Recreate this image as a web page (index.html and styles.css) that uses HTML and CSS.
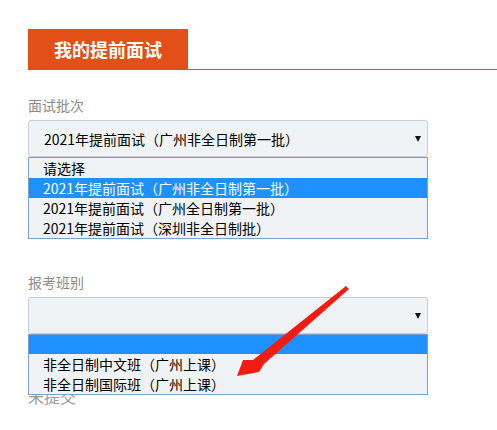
FILE: index.html
```html
<!DOCTYPE html>
<html lang="zh-CN">
<head>
    <meta charset="UTF-8">
    <meta name="viewport" content="width=device-width, initial-scale=1.0">
    <title>我的提前面试</title>
    <link rel="stylesheet" href="styles.css">
</head>
<body>

    <div class="page">
        <div class="tab-head">
            <div class="tab-title">我的提前面试</div>
        </div>

        <div class="field field-batch">
            <div class="field-label">面试批次</div>
            <div class="select-wrap">
                <div class="select-box">
                    <span>2021年提前面试（广州非全日制第一批）</span>
                    <i class="caret"></i>
                </div>
                <ul class="options">
                    <li>请选择</li>
                    <li class="active">2021年提前面试（广州非全日制第一批）</li>
                    <li>2021年提前面试（广州全日制第一批）</li>
                    <li>2021年提前面试（深圳非全日制批）</li>
                </ul>
            </div>
        </div>

        <div class="field field-class">
            <div class="field-label">报考班别</div>
            <div class="select-wrap">
                <div class="select-box">
                    <span></span>
                    <i class="caret"></i>
                </div>
                <ul class="options">
                    <li class="active empty"></li>
                    <li>非全日制中文班（广州上课）</li>
                    <li>非全日制国际班（广州上课）</li>
                </ul>
            </div>
        </div>

        <div class="status">未提交</div>
    </div>

    <!-- red pointer drawn over the open dropdown -->
    <svg class="pointer" width="497" height="430" viewBox="0 0 497 430">
        <path d="M346 286 L349 289 L264 364 L259 372 L237 376 L243 360 L253 360 Z" fill="#f41c12"/>
    </svg>

</body>
</html>
```

FILE: styles.css
```css
body {
    margin: 0;
    font-family: "Noto Sans CJK SC", sans-serif;
    background: #fff;
    color: #000;
}
.page {
    padding: 29px 0 0 28px;
}
.tab-head {
    display: flex;
    height: 40px;
    border-bottom: 1px solid #e0532a;
}
.tab-title {
    width: 160px;
    height: 41px;
    line-height: 41px;
    background-color: #e24f17;
    color: #fff;
    font-size: 18px;
    font-weight: bold;
    text-align: center;
}
.field-label {
    font-size: 14px;
    line-height: 20px;
    color: #8a8a8a;
    margin-bottom: 5px;
}
.field-batch {
    margin-top: 25px;
}
.field-class {
    margin-top: 115px;
}
.select-wrap {
    position: relative;
    width: 400px;
}
.select-box {
    display: flex;
    align-items: center;
    justify-content: space-between;
    box-sizing: border-box;
    height: 37px;
    padding: 0 6px 0 15px;
    background-color: #f0f3f6;
    border: 1px solid #c5ccd4;
    border-radius: 3px;
    font-size: 14px;
}
.caret {
    width: 0;
    height: 0;
    border-left: 3px solid transparent;
    border-right: 3px solid transparent;
    border-top: 6px solid #111;
}
.options {
    position: absolute;
    top: 100%;
    left: 0;
    z-index: 2;
    box-sizing: border-box;
    width: 400px;
    margin: 0;
    padding: 0;
    list-style: none;
    background-color: #f0f3f6;
    border: 1px solid #7f9fd4;
}
.options li {
    height: 20px;
    line-height: 20px;
    padding-left: 14px;
    font-size: 14px;
    white-space: nowrap;
}
.options li.active {
    background-color: #1e90ff;
    color: #fff;
}
.options li.empty {
    height: 19px;
}
.status {
    margin-top: 50px;
    font-size: 16px;
    line-height: 24px;
    color: #999;
}
.pointer {
    position: absolute;
    top: 0;
    left: 0;
    z-index: 3;
    pointer-events: none;
}
```
